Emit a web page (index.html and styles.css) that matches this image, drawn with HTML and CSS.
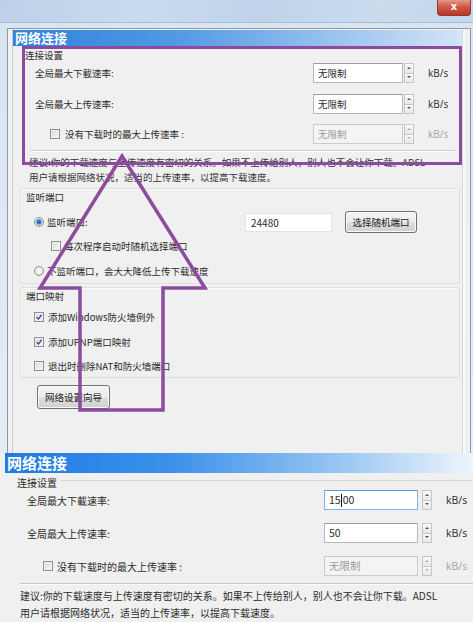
FILE: index.html
```html
<!DOCTYPE html>
<html lang="zh-CN">
<head>
<meta charset="utf-8">
<title>网络连接</title>
<link rel="stylesheet" href="styles.css">
</head>
<body>
<div class="shot1">
  <div class="titlebar"><div class="close">x</div></div>
  <div class="win">
    <div class="gutter"></div>
    <div class="panel">
      <div class="hdr1">网络连接</div>
      <div class="gtitle">连接设置</div>
      <div class="crow">
        <span class="lbl">全局最大下載速率:</span>
        <span class="inp">无限制</span>
        <span class="spin"><i class="up"></i><i class="dn"></i></span>
        <span class="unit">kB/s</span>
      </div>
      <div class="crow r2">
        <span class="lbl">全局最大上传速率:</span>
        <span class="inp">无限制</span>
        <span class="spin"><i class="up"></i><i class="dn"></i></span>
        <span class="unit">kB/s</span>
      </div>
      <div class="crow r3">
        <span class="lbl cbl"><span class="cb"></span><span>没有下载时的最大上传速率 :</span></span>
        <span class="inp dis">无限制</span>
        <span class="spin dis"><i class="up"></i><i class="dn"></i></span>
        <span class="unit dis">kB/s</span>
      </div>
      <div class="sep1"></div>
      <div class="advice1">
        <div>建议:你的下载速度与上传速度有密切的关系。如果不上传给别人，别人也不会让你下载。ADSL</div>
        <div>用户请根据网络状况，适当的上传速率，以提高下载速度。</div>
      </div>
      <div class="gbox g1">
        <div class="glabel">监听端口</div>
        <div class="prow">
          <span class="rb on"></span><span class="plbl">监听端口:</span>
          <span class="pinp">24480</span>
          <span class="btn pbtn">选择随机端口</span>
        </div>
        <div class="orow sub"><span class="cb"></span><span>每次程序启动时随机选择端口</span></div>
        <div class="orow o3"><span class="rb"></span><span>不监听端口，会大大降低上传下载速度</span></div>
      </div>
      <div class="gbox g2">
        <div class="glabel">端口映射</div>
        <div class="orow m1"><span class="cb on"><svg viewBox="0 0 10 10"><path d="M2 5.2 L4.2 7.6 L8.2 2.2" /></svg></span><span>添加Windows防火墙例外</span></div>
        <div class="orow m2"><span class="cb on"><svg viewBox="0 0 10 10"><path d="M2 5.2 L4.2 7.6 L8.2 2.2" /></svg></span><span>添加UPNP端口映射</span></div>
        <div class="orow m3"><span class="cb"></span><span>退出时删除NAT和防火墙端口</span></div>
      </div>
      <div class="btn wiz">网络设置向导</div>
    </div>
    <div class="rgutter"></div>
  </div>
  <div class="hl"></div>
  <svg class="arrow" viewBox="0 0 473 453" width="473" height="453">
    <polygon points="122,156 205,288 163,288 163,410 80,410 80,288 40,288" />
  </svg>
</div>
<div class="shot2">
  <div class="hdr2">网络连接</div>
  <div class="g2title"><span>连接设置</span><span class="gline"></span></div>
  <div class="crow2">
    <span class="lbl">全局最大下載速率:</span>
    <span class="inp2 focus">15<span class="caret"></span>00</span>
    <span class="spin"><i class="up"></i><i class="dn"></i></span>
    <span class="unit2">kB/s</span>
  </div>
  <div class="crow2 s2">
    <span class="lbl">全局最大上传速率:</span>
    <span class="inp2">50</span>
    <span class="spin"><i class="up"></i><i class="dn"></i></span>
    <span class="unit2">kB/s</span>
  </div>
  <div class="crow2 s3">
    <span class="lbl cbl2"><span class="cb"></span><span>没有下载时的最大上传速率 :</span></span>
    <span class="inp2 dis">无限制</span>
    <span class="spin dis"><i class="up"></i><i class="dn"></i></span>
    <span class="unit2 dis">kB/s</span>
  </div>
  <div class="sep2"></div>
  <div class="advice2">
    <div>建议:你的下载速度与上传速度有密切的关系。如果不上传给别人，别人也不会让你下载。ADSL</div>
    <div>用户请根据网络状况，适当的上传速率，以提高下载速度。</div>
  </div>
</div>
</body>
</html>
```
FILE: styles.css
```css
* { box-sizing: border-box; }
body {
  margin: 0;
  width: 473px;
  height: 622px;
  overflow: hidden;
  background: #f0f0f0;
  font-family: "Noto Sans CJK SC", "Noto Sans", sans-serif;
  font-size: 9.5px;
  color: #2b2b2b;
}
.shot1 {
  height: 453px;
  position: relative;
  display: flex;
  flex-direction: column;
  background: linear-gradient(180deg, #d7e4f2 0%, #e4edf6 100%);
}
.titlebar {
  height: 23px;
  flex: none;
  background: linear-gradient(100deg, #bcd1e8 0%, #c9dbee 30%, #bfd3ea 55%, #cadcee 80%, #c3d7ec 100%);
  border-bottom: 1px solid #a9bed6;
  display: flex;
  justify-content: flex-end;
  padding-right: 2px;
}
.close {
  width: 34px;
  height: 16px;
  background: linear-gradient(180deg, #e6988a 0%, #cf5a48 45%, #b83626 100%);
  border: 1px solid #8e3b30;
  border-top: none;
  border-radius: 0 0 4px 4px;
  color: #fff;
  font: bold 10px/14px "DejaVu Sans", sans-serif;
  text-align: center;
}
.win {
  flex: 1;
  margin: 5px 2px 0 7px;
  border: 1px solid #8f9aa6;
  border-bottom: none;
  background: #f0f0f0;
  display: flex;
}
.gutter { width: 5px; flex: none; border-right: 1px solid #cacaca; }
.rgutter { flex: 1; border-left: 1px solid #d6d6d6; box-shadow: inset 2px 0 0 #fafafa; }
.panel {
  width: 449px;
  flex: none;
  padding-top: 1px;
  display: flex;
  flex-direction: column;
}
.hdr1 {
  height: 16px;
  line-height: 16px;
  color: #fff;
  font-size: 13px;
  font-weight: bold;
  padding-left: 2px;
  background: linear-gradient(90deg, #2f84de 0%, #4f98e4 35%, #8dbbec 65%, #d3e5f7 100%);
}
.gtitle { margin-top: 1px; height: 16px; line-height: 16px; padding-left: 12px; }
.crow {
  display: flex;
  align-items: center;
  height: 20px;
  padding-left: 22px;
}
.crow.r2 { margin-top: 11px; }
.crow.r3 { margin-top: 10px; }
.lbl { flex: 1; }
.cbl { display: flex; align-items: center; padding-left: 15px; }
.cbl .cb { margin-right: 5px; }
.inp {
  width: 90px;
  height: 20px;
  border: 1px solid #b5b8be;
  border-top-color: #9a9ca1;
  background: #fff;
  padding-left: 4px;
  line-height: 18px;
}
.inp.dis, .inp2.dis { background: #f4f4f4; color: #9a9a9a; border-color: #cbcbcb; }
.spin {
  width: 10px;
  height: 20px;
  margin-left: 1px;
  display: flex;
  flex-direction: column;
}
.spin i {
  flex: 1;
  border: 1px solid #c6c6c6;
  background: linear-gradient(#fafafa, #e8e8e8);
  position: relative;
}
.spin i.dn { border-top: none; }
.spin i::after {
  content: "";
  position: absolute;
  left: 2px;
  top: 3px;
  border-left: 2px solid transparent;
  border-right: 2px solid transparent;
}
.spin i.up::after { border-bottom: 2px solid #555; }
.spin i.dn::after { border-top: 2px solid #555; top: 2px; }
.spin.dis i::after { opacity: 0.45; }
.unit {
  width: 34px;
  margin-left: 14px;
  font-family: "Open Sans", sans-serif;
  font-size: 10px;
}
.unit.dis, .unit2.dis { color: #a5a5a5; }
.sep1 {
  margin: 6px 7px 0 17px;
  border-top: 1px solid #cfcfcf;
  border-bottom: 1px solid #fbfbfb;
}
.advice1 {
  margin-top: 3px;
  padding-left: 16px;
  line-height: 15px;
  white-space: nowrap;
  color: #333;
}
.gbox {
  margin: 3px 2px 0 7px;
  border: 1px solid #dadfe3;
  border-radius: 2px;
  box-shadow: inset 1px 1px 0 #fbfbfb;
}
.g1 { height: 96px; }
.g2 { height: 91px; }
.glabel { margin-top: 1px; height: 14px; line-height: 14px; padding-left: 5px; }
.prow {
  display: flex;
  align-items: center;
  height: 22px;
  margin-top: 7px;
  padding-left: 13px;
}
.plbl { flex: 1; margin-left: 3px; }
.pinp {
  width: 87px;
  height: 19px;
  background: #fff;
  border: 1px solid #e2e3e6;
  line-height: 17px;
  padding-left: 5px;
  font-size: 10px;
}
.btn {
  border: 1px solid #707070;
  border-radius: 3px;
  background: linear-gradient(180deg, #f4f4f4 0%, #ececec 50%, #dedede 51%, #d0d0d0 100%);
  box-shadow: inset 0 0 0 1px #fbfbfb;
  display: flex;
  align-items: center;
  justify-content: center;
  color: #222;
}
.pbtn { width: 72px; height: 22px; margin-left: 13px; margin-right: 42px; }
.orow {
  display: flex;
  align-items: center;
  height: 14px;
  padding-left: 13px;
  gap: 4px;
}
.orow.sub { margin-top: 6px; padding-left: 30px; gap: 3px; }
.orow.o3 { margin-top: 11px; gap: 3px; }
.orow.m1 { margin-top: 7px; }
.orow.m2 { margin-top: 11px; }
.orow.m3 { margin-top: 10px; }
.cb {
  width: 10px;
  height: 10px;
  flex: none;
  border: 1px solid #8f8f8f;
  background: linear-gradient(135deg, #d8d8d8 0%, #f7f7f7 100%);
  box-shadow: inset 0 0 0 1px #f2f2f2;
  display: flex;
}
.cb svg { width: 8px; height: 8px; }
.cb svg path { fill: none; stroke: #1e3f86; stroke-width: 1.6; }
.rb {
  width: 10px;
  height: 10px;
  flex: none;
  border-radius: 50%;
  border: 1px solid #8f8f8f;
  background: radial-gradient(circle, #ffffff 0%, #dadada 100%);
}
.rb.on {
  background: radial-gradient(circle, #1f5fae 0, #3b7fd0 2px, #a9c8ec 3px, #eef3f8 4px);
}
.wiz { width: 73px; height: 24px; margin: 7px 0 0 24px; }
.hl {
  position: absolute;
  left: 22px;
  top: 46px;
  width: 440px;
  height: 119px;
  border: 3px solid #8c4b9e;
}
.arrow {
  position: absolute;
  left: 0;
  top: 0;
  pointer-events: none;
}
.arrow polygon { fill: none; stroke: #8c4b9e; stroke-width: 3.5; stroke-linejoin: miter; }

.shot2 {
  height: 169px;
  background: #f0f0f0;
  display: flex;
  flex-direction: column;
  font-size: 10px;
}
.hdr2 {
  margin-left: 5px;
  height: 20px;
  line-height: 20px;
  color: #fff;
  font-size: 15px;
  font-weight: bold;
  padding-left: 2px;
  background: linear-gradient(90deg, #1f7be3 0%, #3a90ea 35%, #8fc0f1 68%, #eef5fc 100%);
}
.g2title {
  display: flex;
  align-items: center;
  margin-top: 2px;
  height: 14px;
  padding-left: 17px;
}
.gline { flex: 1; margin-left: 4px; margin-top: -3px; border-top: 1px solid #d6d6d6; }
.crow2 {
  display: flex;
  align-items: center;
  height: 20px;
  margin-top: 1px;
  padding-left: 27px;
}
.crow2.s2, .crow2.s3 { margin-top: 13px; }
.cbl2 { display: flex; align-items: center; padding-left: 16px; }
.cbl2 .cb { margin-right: 4px; }
.inp2 {
  width: 94px;
  height: 20px;
  border: 1px solid #b5b8be;
  border-top-color: #9a9ca1;
  background: #fff;
  padding-left: 4px;
  line-height: 18px;
  font-size: 10.5px;
  display: flex;
  align-items: center;
}
.inp2.focus { border-color: #7eb4ea; border-top-color: #569de5; }
.caret { width: 1px; height: 13px; background: #111; margin: 0 0.5px; }
.crow2 .spin { margin-left: 4px; }
.unit2 {
  width: 27px;
  margin-left: 14px;
  font-family: "Open Sans", sans-serif;
  font-size: 10.5px;
}
.sep2 {
  margin: 7px 0 0 20px;
  border-top: 1px solid #c9c9c9;
  border-bottom: 1px solid #fbfbfb;
}
.advice2 {
  margin-top: 2px;
  padding-left: 20px;
  line-height: 17px;
  white-space: nowrap;
  color: #2b2b2b;
}
```
